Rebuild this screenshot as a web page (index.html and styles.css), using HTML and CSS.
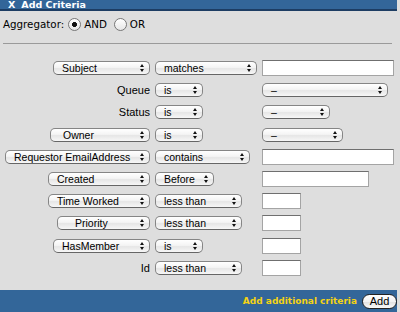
FILE: index.html
```html
<!DOCTYPE html>
<html lang="en">
<head>
  <meta charset="UTF-8" />
  <title>Add Criteria</title>
  <link rel="stylesheet" href="styles.css">
</head>
<body>

  <div class="panel">
    <div class="titlebar"><span class="close">X</span>Add Criteria</div>

    <div class="aggregator">
      <span>Aggregator:</span>
      <label class="radio"><input type="radio" name="agg" checked>AND</label>
      <label class="radio"><input type="radio" name="agg">OR</label>
    </div>

    <hr class="divider">

    <div class="criteria">
      <!-- Subject -->
      <div class="popup w97"><span>Subject</span><i class="arrows"></i></div>
      <div class="popup w102"><span>matches</span><i class="arrows"></i></div>
      <input type="text" class="textbox w132">

      <!-- Queue -->
      <div class="field-label">Queue</div>
      <div class="popup w48"><span>is</span><i class="arrows"></i></div>
      <div class="popup w126"><span>–</span><i class="arrows"></i></div>

      <!-- Status -->
      <div class="field-label">Status</div>
      <div class="popup w48"><span>is</span><i class="arrows"></i></div>
      <div class="popup w68"><span>–</span><i class="arrows"></i></div>

      <!-- Owner -->
      <div class="popup w100 indent"><span>Owner</span><i class="arrows"></i></div>
      <div class="popup w48"><span>is</span><i class="arrows"></i></div>
      <div class="popup w81"><span>–</span><i class="arrows"></i></div>

      <!-- Requestor -->
      <div class="popup w145"><span>Requestor EmailAddress</span><i class="arrows"></i></div>
      <div class="popup w95"><span>contains</span><i class="arrows"></i></div>
      <input type="text" class="textbox w132">

      <!-- Created -->
      <div class="popup w102"><span>Created</span><i class="arrows"></i></div>
      <div class="popup w59"><span>Before</span><i class="arrows"></i></div>
      <input type="text" class="textbox w107">

      <!-- Time Worked -->
      <div class="popup w102"><span>Time Worked</span><i class="arrows"></i></div>
      <div class="popup w87"><span>less than</span><i class="arrows"></i></div>
      <input type="text" class="textbox w39">

      <!-- Priority -->
      <div class="popup w93 indent-wide"><span>Priority</span><i class="arrows"></i></div>
      <div class="popup w87"><span>less than</span><i class="arrows"></i></div>
      <input type="text" class="textbox w39">

      <!-- HasMember -->
      <div class="popup w97"><span>HasMember</span><i class="arrows"></i></div>
      <div class="popup w48"><span>is</span><i class="arrows"></i></div>
      <input type="text" class="textbox w39">

      <!-- Id -->
      <div class="field-label">Id</div>
      <div class="popup w87"><span>less than</span><i class="arrows"></i></div>
      <input type="text" class="textbox w39">
    </div>

    <div class="footer">
      <span class="footer-label">Add additional criteria</span>
      <button type="button" class="add-btn">Add</button>
    </div>
  </div>

</body>
</html>
```

FILE: styles.css
```css
* {
  margin: 0;
  padding: 0;
  box-sizing: border-box;
}

html, body {
  height: 100%;
  background: #dedede;
  font-family: 'Liberation Sans', Arial, sans-serif;
  font-size: 10.5px;
  color: #000;
}

.panel {
  width: 397px;
  height: 312px;
  display: flex;
  flex-direction: column;
  background: #dedede;
}

/* title bar */
.titlebar {
  height: 11px;
  background: #336699;
  border-bottom: 2px solid #1d3d63;
  color: #fff;
  font-family: 'DejaVu Sans', Verdana, sans-serif;
  font-weight: bold;
  font-size: 9.5px;
  line-height: 9px;
  padding-left: 8px;
}

.titlebar .close {
  margin-right: 6px;
}

/* aggregator row */
.aggregator {
  display: flex;
  align-items: center;
  height: 14px;
  margin: 6px 0 6px 3px;
  font-family: 'DejaVu Sans', Verdana, sans-serif;
  font-size: 10.3px;
}

.radio {
  display: flex;
  align-items: center;
  gap: 3px;
  margin-left: 4px;
}

.radio + .radio {
  margin-left: 7px;
}

.radio input {
  appearance: none;
  width: 13px;
  height: 13px;
  border-radius: 50%;
  border: 1px solid #777;
  background: linear-gradient(#fff, #e6e6e6);
}

.radio input:checked {
  background: radial-gradient(circle, #111 0 2.2px, transparent 2.8px), linear-gradient(#fff, #e6e6e6);
}

.divider {
  border: none;
  border-top: 1px solid #9a9a9a;
  margin: 6px 5px 0 3px;
}

/* criteria grid */
.criteria {
  display: grid;
  grid-template-columns: 150px 102px 1fr;
  grid-auto-rows: 16px;
  column-gap: 5px;
  row-gap: 6.2px;
  align-items: center;
  padding-top: 16px;
}

.criteria > :nth-child(3n+1) {
  justify-self: end;
}

.field-label {
  line-height: 16px;
  font-size: 11px;
}

.popup {
  height: 14px;
  display: flex;
  align-items: center;
  justify-content: space-between;
  padding-left: 8px;
  border: 1px solid #858585;
  border-bottom-color: #666;
  border-radius: 5px;
  background: linear-gradient(#ffffff 0%, #f4f4f4 45%, #e6e6e6 55%, #f7f7f7 100%);
  white-space: nowrap;
  line-height: 12px;
  font-size: 10.5px;
}

.popup.indent {
  padding-left: 12px;
}

.popup.indent-wide {
  padding-left: 17px;
}

.arrows {
  display: flex;
  flex-direction: column;
  gap: 2px;
  margin-right: 5px;
}

.arrows::before,
.arrows::after {
  content: "";
  border-left: 2.5px solid transparent;
  border-right: 2.5px solid transparent;
}

.arrows::before {
  border-bottom: 3px solid #111;
}

.arrows::after {
  border-top: 3px solid #111;
}

.textbox {
  height: 16px;
  border: 1px solid #a4a4a4;
  border-top-color: #6f6f6f;
  background: #fff;
}

.w39 { width: 39px; }
.w48 { width: 48px; }
.w59 { width: 59px; }
.w68 { width: 68px; }
.w81 { width: 81px; }
.w87 { width: 87px; }
.w93 { width: 93px; }
.w95 { width: 95px; }
.w97 { width: 97px; }
.w100 { width: 100px; }
.w102 { width: 102px; }
.w107 { width: 107px; }
.w126 { width: 126px; }
.w132 { width: 132px; }
.w145 { width: 145px; }

/* footer */
.footer {
  margin-top: auto;
  height: 22px;
  background: #336699;
  display: flex;
  align-items: center;
  justify-content: flex-end;
  gap: 5px;
}

.footer-label {
  color: #f5d313;
  font-family: 'DejaVu Sans', Verdana, sans-serif;
  font-weight: bold;
  font-size: 9px;
}

.add-btn {
  width: 35px;
  height: 15px;
  border: 1px solid #222;
  border-radius: 8px;
  background: linear-gradient(#ffffff 0%, #f2f2f2 50%, #e2e2e2 55%, #fafafa 100%);
  font-family: 'Liberation Sans', Arial, sans-serif;
  font-size: 11px;
  line-height: 13px;
  color: #000;
}
```
